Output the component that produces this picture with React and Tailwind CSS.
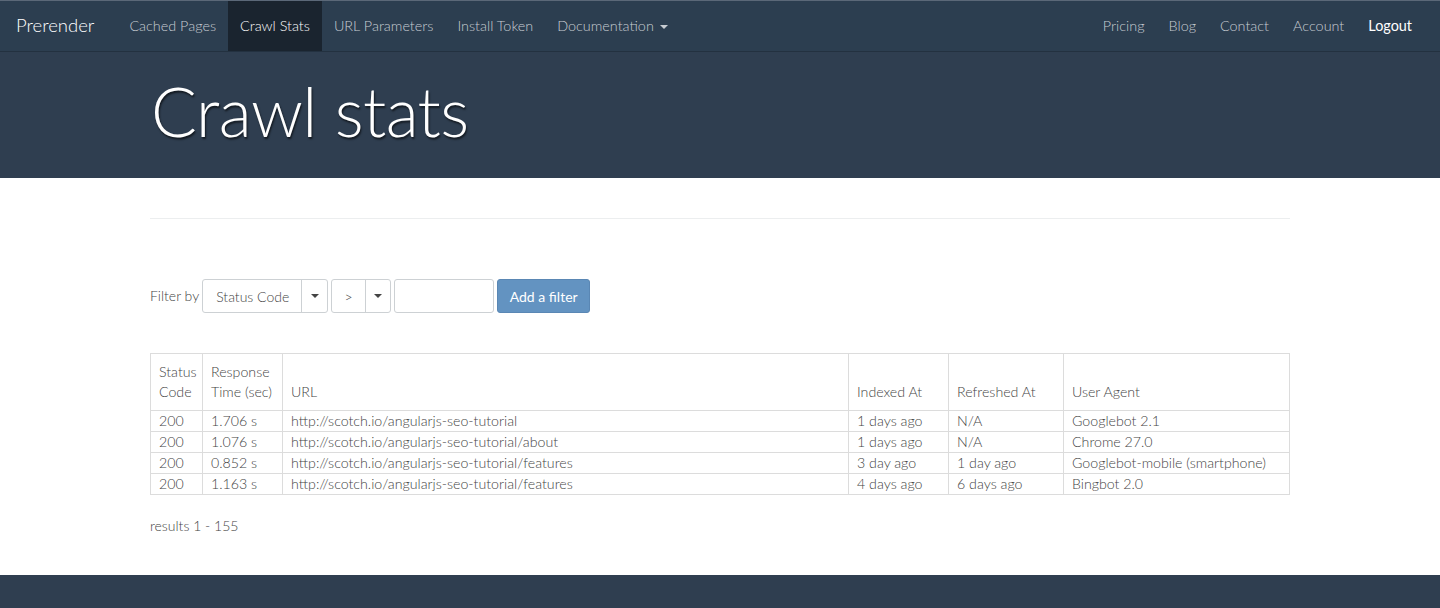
import React from 'react';

const rows = [
  ['200', '1.706 s', 'http://scotch.io/angularjs-seo-tutorial', '1 days ago', 'N/A', 'Googlebot 2.1'],
  ['200', '1.076 s', 'http://scotch.io/angularjs-seo-tutorial/about', '1 days ago', 'N/A', 'Chrome 27.0'],
  ['200', '0.852 s', 'http://scotch.io/angularjs-seo-tutorial/features', '3 day ago', '1 day ago', 'Googlebot-mobile (smartphone)'],
  ['200', '1.163 s', 'http://scotch.io/angularjs-seo-tutorial/features', '4 days ago', '6 days ago', 'Bingbot 2.0'],
];

const Caret = ({ className = '' }) => (
  <span className={`inline-block w-0 h-0 border-l-[4px] border-r-[4px] border-t-[4px] border-l-transparent border-r-transparent ${className}`} />
);

const App = () => {
  return (
    <div className="min-h-[608px] bg-white text-[#2c3e50] font-['Lato','Liberation_Sans',sans-serif] flex flex-col">
      <nav className="h-[52px] bg-[#2c3e50] border-t border-t-[#5b6878] border-b border-b-[#233140] flex items-stretch justify-between text-[14.4px] font-light">
        <div className="flex items-stretch">
          <a className="flex items-center pl-[16px] pr-[23px] text-[18.5px] text-white">Prerender</a>
          <a className="flex items-center px-3 text-[#c7ccd2]">Cached Pages</a>
          <a className="flex items-center px-3 bg-[#1a242f] text-white">Crawl Stats</a>
          <a className="flex items-center px-3 text-[#c7ccd2]">URL Parameters</a>
          <a className="flex items-center px-3 text-[#c7ccd2]">Install Token</a>
          <a className="flex items-center px-3 text-[#c7ccd2] gap-[6px]">
            Documentation <Caret className="border-t-[#c7ccd2] mt-[2px]" />
          </a>
        </div>
        <div className="flex items-stretch pr-[16px]">
          <a className="flex items-center px-3 text-[#c7ccd2]">Pricing</a>
          <a className="flex items-center px-3 text-[#c7ccd2]">Blog</a>
          <a className="flex items-center px-3 text-[#c7ccd2]">Contact</a>
          <a className="flex items-center px-3 text-[#c7ccd2]">Account</a>
          <a className="flex items-center px-3 text-white font-normal">Logout</a>
        </div>
      </nav>

      <header className="h-[126px] bg-[#2f3e50]">
        <div className="w-[1140px] mx-auto">
          <h1 className="pt-[18px] text-[68px] leading-[1.2] font-light text-white [text-shadow:1px_2px_2px_rgba(0,0,0,0.6)] tracking-[-0.6px] pl-[1px]">
            Crawl stats
          </h1>
        </div>
      </header>

      <main className="flex-1 w-[1140px] mx-auto">
        <hr className="mt-[40px] border-t border-[#eceeef]" />

        <div className="mt-[60px] flex items-center text-[14px] text-[#444] font-light">
          <span className="mr-[3px] -mt-[2px] whitespace-nowrap">Filter by</span>
          <div className="flex h-[34px] border border-[#cdd1d4] rounded-[3px] mr-[3px]">
            <span className="flex items-center px-[13px] w-[99px] whitespace-nowrap border-r border-[#cdd1d4]">Status Code</span>
            <span className="flex items-center justify-center w-[25px]"><Caret className="border-t-[#444]" /></span>
          </div>
          <div className="flex h-[34px] border border-[#cdd1d4] rounded-[3px] mr-[3px]">
            <span className="flex items-center justify-center w-[34px] border-r border-[#cdd1d4]">&gt;</span>
            <span className="flex items-center justify-center w-[24px]"><Caret className="border-t-[#444]" /></span>
          </div>
          <input className="h-[34px] w-[100px] border border-[#cdd1d4] rounded-[3px] mr-[3px] outline-none" />
          <button className="h-[34px] w-[93px] rounded-[3px] bg-[#6393c1] border border-[#5a87b4] text-white text-[14px] font-normal">Add a filter</button>
        </div>

        <table className="mt-[40px] w-full table-fixed border-collapse border border-[#dcdcdc] text-[14.2px] text-[#444] font-light">
          <thead>
            <tr className="align-bottom text-left">
              <th className="font-light border border-[#dcdcdc] px-[8px] pt-[8px] pb-[8px] leading-[20px] w-[52px]">Status<br />Code</th>
              <th className="font-light border border-[#dcdcdc] px-[8px] pt-[8px] pb-[8px] leading-[20px] w-[80px]">Response<br />Time (sec)</th>
              <th className="font-light border border-[#dcdcdc] px-[8px] pb-[8px] leading-[20px]">URL</th>
              <th className="font-light border border-[#dcdcdc] px-[8px] pb-[8px] leading-[20px] w-[100px]">Indexed At</th>
              <th className="font-light border border-[#dcdcdc] px-[8px] pb-[8px] leading-[20px] w-[115px]">Refreshed At</th>
              <th className="font-light border border-[#dcdcdc] px-[8px] pb-[8px] leading-[20px] w-[226px]">User Agent</th>
            </tr>
          </thead>
          <tbody>
            {rows.map((r, i) => (
              <tr key={i}>
                {r.map((c, j) => (
                  <td key={j} className="border border-[#dcdcdc] px-[8px] h-[21px] leading-[20px] py-0 whitespace-nowrap">{c}</td>
                ))}
              </tr>
            ))}
          </tbody>
        </table>

        <p className="mt-[20px] text-[14px] text-[#444] font-light">results 1 - 155</p>
      </main>

      <footer className="h-[33px] bg-[#2f3e50] mt-auto" />
    </div>
  );
};

export default App;
